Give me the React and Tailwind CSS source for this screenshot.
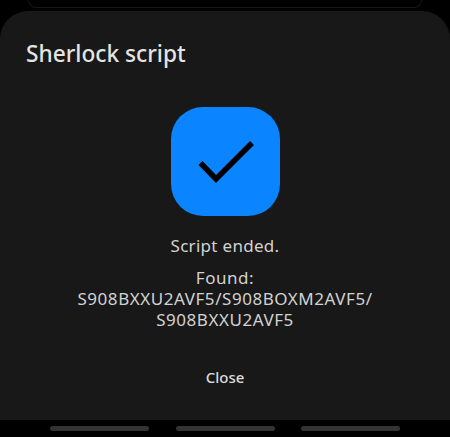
export default function App() {
  return (
    <div className="w-[450px] h-[437px] bg-black flex flex-col overflow-hidden font-['Noto_Sans',sans-serif]">
      {/* card behind the sheet */}
      <div className="h-[8px] mx-[28px] shrink-0 rounded-b-[12px] border-b border-x border-[#161616]" />
      <div className="mt-[3px] h-[409px] shrink-0 bg-[#181818] rounded-t-[28px] flex flex-col">
        <h1 className="mt-[28px] ml-[26px] text-[22.7px] leading-[30px] font-medium text-[#e4e4e4]">Sherlock script</h1>
        <div className="mt-[38px] self-center w-[109px] h-[109px] rounded-[32px] bg-[#0a84ff]">
          <svg width="109" height="109" viewBox="0 0 109 109">
            <path d="M29.5 56 L45 72 L81 36" fill="none" stroke="#000" strokeWidth="5.5" />
          </svg>
        </div>
        <p className="mt-[19px] text-center text-[17px] leading-[21px] tracking-[0.3px] text-[#d2d2d2]">Script ended.</p>
        <div className="mt-[12px] text-center text-[17px] leading-[21px] tracking-[0.55px] text-[#d2d2d2]">
          <p className="leading-[20px]">Found:</p>
          <p>S908BXXU2AVF5/S908BOXM2AVF5/</p>
          <p>S908BXXU2AVF5</p>
        </div>
        <button className="mt-[37px] self-center text-[15px] leading-[20px] font-medium text-[#dcdcdc]">Close</button>
      </div>
      {/* nav hint bars */}
      <div className="flex justify-center gap-[26.5px] pt-[6px]">
        <div className="w-[99px] h-[5px] rounded-full bg-[#333333]" />
        <div className="w-[99px] h-[5px] rounded-full bg-[#333333]" />
        <div className="w-[99px] h-[5px] rounded-full bg-[#333333]" />
      </div>
    </div>
  );
}
